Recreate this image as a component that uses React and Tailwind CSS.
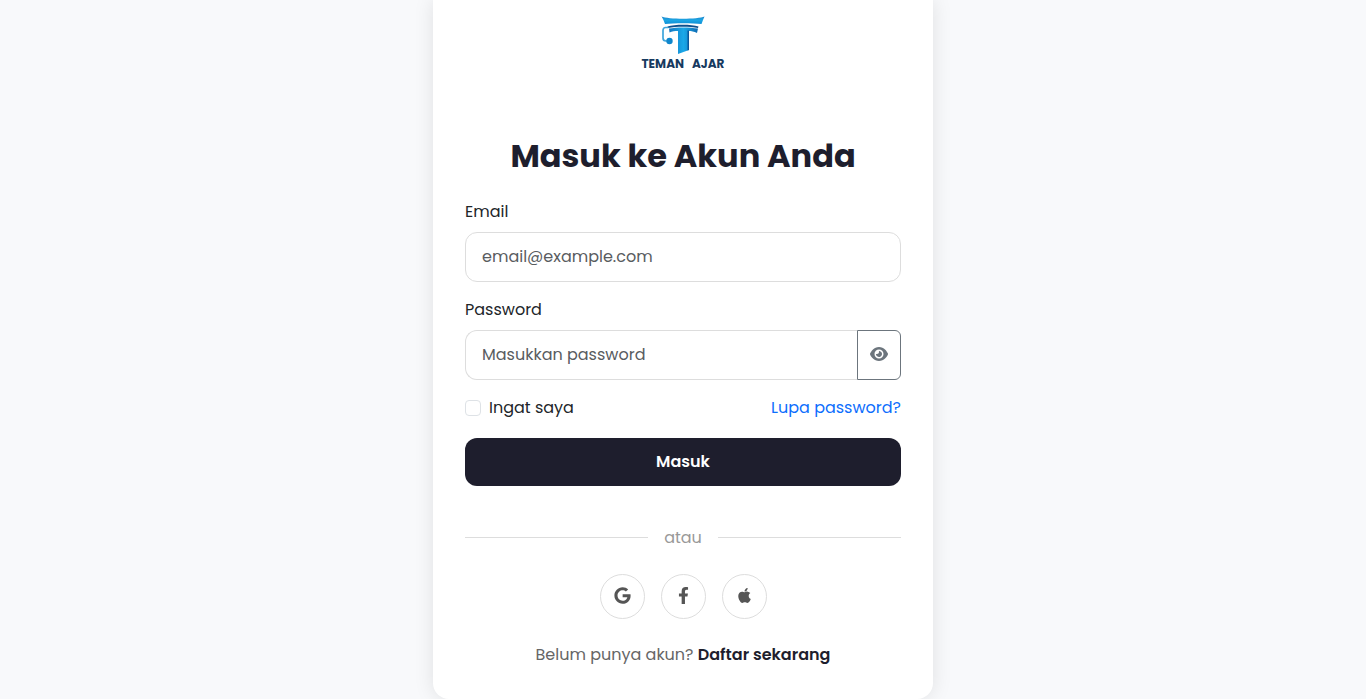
import { FaApple, FaFacebookF, FaGoogle } from "react-icons/fa";
import { FaEye } from "react-icons/fa6";

function Logo() {
  return (
    <div className="flex flex-col items-center">
      <svg width="44" height="40" viewBox="0 0 44 40" fill="none" aria-hidden="true">
        <defs>
          <linearGradient id="bar" x1="0" y1="0" x2="0" y2="1">
            <stop offset="0" stopColor="#1d86cc" />
            <stop offset="0.5" stopColor="#1ba6e4" />
            <stop offset="1" stopColor="#0f8fd6" />
          </linearGradient>
          <linearGradient id="stem" x1="0" y1="0" x2="1" y2="0">
            <stop offset="0" stopColor="#1478c2" />
            <stop offset="0.5" stopColor="#1aa8e8" />
            <stop offset="1" stopColor="#0e6ab2" />
          </linearGradient>
        </defs>
        <path d="M0.500 0.500C7 3.500 37 3.500 43.500 0.500C42.500 3 41.500 5 40.500 8C32 7 12 7 4 8C3 5 2 3 0.500 0.500Z" fill="url(#bar)" />
        <path d="M6.500 10.500C14 8.300 30 8.300 37.500 10.500L37 12C29 10.300 15 10.300 7 12Z" fill="#0c4f8c" />
        <path d="M8 12.500C15 11 29 11 37 12.500L36 17C33 15.500 30 15 28 15V34L17 38V15C14 15 11 15.300 8.500 16.500Z" fill="url(#stem)" />
        <path d="M26.500 14.500V34.600L28 34V14.500Z" fill="#0a579b" />
        <path d="M7.500 11.500H4.500C3 11.500 2 12.500 2 14.500V22C2 24 3 25 5 25H8" stroke="#3fa5db" strokeWidth="1.700" />
        <circle cx="8.500" cy="25" r="3.200" fill="#0f86cc" />
      </svg>
      <span className="flex gap-2 text-xs leading-4 font-bold text-[#173a60]">
        <span>TEMAN</span>
        <span>AJAR</span>
      </span>
    </div>
  );
}

function SocialButton({ label, children }) {
  return (
    <button type="button" aria-label={label} className="flex size-[45px] items-center justify-center rounded-full border border-[#dddddd] bg-white pb-0.5 text-[17px] text-[#555555]">
      {children}
    </button>
  );
}

const fieldClass =
  "h-[50px] w-full min-w-0 border border-[#dddddd] bg-white px-4 pb-0.5 text-[#212529] placeholder:text-[#595c5f] outline-none focus:border-[#1e1e2d]";

export default function App() {
  return (
    <div className="flex min-h-screen justify-center bg-[#f8f9fb] font-['Poppins',Inter,sans-serif] text-base text-[#212529]">
      <main className="w-full max-w-[500px] rounded-b-2xl bg-white px-8 pt-4 pb-8 shadow-[0_0_20px_rgba(0,0,0,0.1)]">
        <Logo />
        <h1 className="mt-16 text-center text-[32px] leading-10 font-bold text-[#1e1e2d]">Masuk ke Akun Anda</h1>
        <form className="mt-6" onSubmit={(e) => e.preventDefault()}>
          <label htmlFor="email" className="mb-2 block">Email</label>
          <input id="email" type="email" placeholder="email@example.com" className={`${fieldClass} rounded-xl`} />
          <label htmlFor="password" className="mt-4 mb-2 block">Password</label>
          <div className="flex">
            <input id="password" type="password" placeholder="Masukkan password" className={`${fieldClass} rounded-l-xl border-r-0`} />
            <button type="button" aria-label="Tampilkan password" className="flex w-11 shrink-0 items-center justify-center rounded-r-md border border-[#6c757d] pb-0.5 text-[#6c757d]">
              <FaEye className="size-[18px]" />
            </button>
          </div>
          <div className="mt-4 flex items-center justify-between">
            <label className="flex items-center gap-2">
              <input type="checkbox" className="size-4 appearance-none rounded border border-[#dee2e6] bg-white checked:bg-[#0d6efd]" />
              Ingat saya
            </label>
            <a href="#lupa" className="text-[#0d6efd]">Lupa password?</a>
          </div>
          <button type="submit" className="mt-[18px] h-12 w-full rounded-xl bg-[#1e1e2d] font-semibold text-white">Masuk</button>
        </form>
        <div className="mt-10 flex items-center gap-4 text-[#999999]">
          <span className="h-0.5 flex-1 border-t border-[#dddddd]" />
          <span>atau</span>
          <span className="h-0.5 flex-1 border-t border-[#dddddd]" />
        </div>
        <div className="mt-6 flex justify-center gap-4">
          <SocialButton label="Masuk dengan Google"><FaGoogle /></SocialButton>
          <SocialButton label="Masuk dengan Facebook"><FaFacebookF /></SocialButton>
          <SocialButton label="Masuk dengan Apple"><FaApple /></SocialButton>
        </div>
        <p className="mt-6 text-center text-[#666666]">
          Belum punya akun? <a href="#daftar" className="font-semibold text-[#1e1e2d]">Daftar sekarang</a>
        </p>
      </main>
    </div>
  );
}
